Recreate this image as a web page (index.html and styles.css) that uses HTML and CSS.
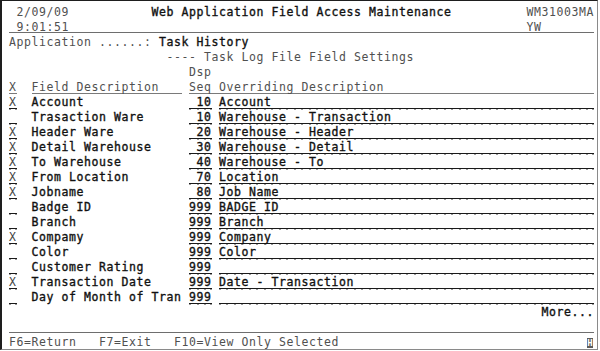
FILE: index.html
```html
<!DOCTYPE html>
<html lang="en">
<head>
    <meta charset="UTF-8">
    <title>Web Application Field Access Maintenance</title>
    <link rel="stylesheet" href="styles.css">
</head>
<body>
    <div class="screen">
        <!-- Header -->
        <div class="head">
            <div class="head-left">
                <div class="txt"> 2/09/09</div>
                <div class="txt"> 9:01:51</div>
            </div>
            <div class="title">Web Application Field Access Maintenance</div>
            <div class="head-right">
                <div class="txt">WM31003MA</div>
                <div class="txt">YW</div>
            </div>
        </div>

        <div class="line">Application ......: <span class="out">Task History</span></div>
        <div class="line">                     ---- Task Log File Field Settings</div>
        <div class="line">                        Dsp</div>

        <div class="row">
            <span class="x hd">X</span>
            <span class="desc hd">Field Description</span>
            <span class="seqovr hd">Seq Overriding Description</span>
        </div>

        <div class="row"><span class="x fld">X</span><span class="desc out">Account</span><span class="seq fld">10</span><span class="ovr fld">Account</span></div>
        <div class="row"><span class="x fld"></span><span class="desc out">Trasaction Ware</span><span class="seq fld">10</span><span class="ovr fld">Warehouse - Transaction</span></div>
        <div class="row"><span class="x fld">X</span><span class="desc out">Header Ware</span><span class="seq fld">20</span><span class="ovr fld">Warehouse - Header</span></div>
        <div class="row"><span class="x fld">X</span><span class="desc out">Detail Warehouse</span><span class="seq fld">30</span><span class="ovr fld">Warehouse - Detail</span></div>
        <div class="row"><span class="x fld">X</span><span class="desc out">To Warehouse</span><span class="seq fld">40</span><span class="ovr fld">Warehouse - To</span></div>
        <div class="row"><span class="x fld">X</span><span class="desc out">From Location</span><span class="seq fld">70</span><span class="ovr fld">Location</span></div>
        <div class="row"><span class="x fld">X</span><span class="desc out">Jobname</span><span class="seq fld">80</span><span class="ovr fld">Job Name</span></div>
        <div class="row"><span class="x fld"></span><span class="desc out">Badge ID</span><span class="seq fld">999</span><span class="ovr fld">BADGE ID</span></div>
        <div class="row"><span class="x fld"></span><span class="desc out">Branch</span><span class="seq fld">999</span><span class="ovr fld">Branch</span></div>
        <div class="row"><span class="x fld">X</span><span class="desc out">Compamy</span><span class="seq fld">999</span><span class="ovr fld">Company</span></div>
        <div class="row"><span class="x fld"></span><span class="desc out">Color</span><span class="seq fld">999</span><span class="ovr fld">Color</span></div>
        <div class="row"><span class="x fld"></span><span class="desc out">Customer Rating</span><span class="seq fld">999</span><span class="ovr fld"></span></div>
        <div class="row"><span class="x fld">X</span><span class="desc out">Transaction Date</span><span class="seq fld">999</span><span class="ovr fld">Date - Transaction</span></div>
        <div class="row"><span class="x fld"></span><span class="desc out">Day of Month of Tran</span><span class="seq fld">999</span><span class="ovr fld"></span></div>

        <div class="more">More...</div>

        <!-- Function keys -->
        <div class="footer">
            <span class="keys">F6=Return   F7=Exit   F10=View Only Selected</span>
            <span class="ind">H</span>
        </div>
    </div>
</body>
</html>
```

FILE: styles.css
```css
/* 5250 style screen, 78 columns of 7.5px, rows of 15px */
:root {
    --label-color: #505050;
    --data-color: #111;
    --field-line: #1a1a1a;
    --field-tick: #9a9a9a;
    --rule-color: #6e6e6e;
    --col: 7.5px;
}

body {
    margin: 0;
    background: #fff;
    font-family: "DejaVu Sans Mono", monospace;
    font-size: 11.5px;
    letter-spacing: 0.576px;
    line-height: 15px;
    color: var(--label-color);
}

.screen {
    box-sizing: border-box;
    width: 598px;
    height: 350px;
    border-left: 2px solid #1e1e1e;
    border-top: 1px solid #1e1e1e;
    border-right: 1px solid #8a8a8a;
    border-bottom: 1px solid #8a8a8a;
    padding: 4px 0 0 7px;
    overflow: hidden;
}

.screen > div {
    width: 585px;
}

/* Header */
.head {
    display: grid;
    grid-template-columns: 142.5px 375px 67.5px;
    height: 27px;
    border-bottom: 1px solid var(--rule-color);
    margin-bottom: 2px;
}

.txt,
.title,
.line,
.row span,
.keys {
    white-space: pre;
    height: 15px;
}

/* bright (high intensity) text */
.title,
.out,
.fld,
.more {
    color: var(--data-color);
    -webkit-text-stroke: 0.35px var(--data-color);
}

/* Data rows */
.row {
    display: flex;
    height: 15px;
}

.x {
    width: 7.5px;
}

.desc {
    width: 150px;
    margin-left: 15px;
}

.seq {
    width: 22.5px;
    margin-left: 7.5px;
    text-align: right;
}

.ovr {
    width: 375px;
    margin-left: 7.5px;
}

.seqovr {
    width: 405px;
    margin-left: 7.5px;
}

.hd {
    background: linear-gradient(#7a7a7a, #7a7a7a) 0 13px / 100% 1px no-repeat;
}

.fld {
    background:
        linear-gradient(var(--field-line), var(--field-line)) 0 13px / 100% 1px no-repeat,
        linear-gradient(var(--field-tick), var(--field-tick)) right 14px / 2px 1px no-repeat,
        repeating-linear-gradient(90deg, var(--field-tick) 0 2px, transparent 2px var(--col)) 0 14px / 100% 1px no-repeat;
}

.x.fld {
    color: #444;
    -webkit-text-stroke: 0;
}

.more {
    height: 15px;
    text-align: right;
}

/* Footer */
.footer {
    display: flex;
    justify-content: space-between;
    margin-top: 12px;
    padding-top: 2px;
    border-top: 1px solid var(--rule-color);
    height: 15px;
}

.ind {
    display: inline-block;
    width: 6px;
    height: 10px;
    margin: 3px 1px 0 0;
    background: #5c5c5c;
    color: #fff;
    font-size: 9px;
    line-height: 10px;
    letter-spacing: 0;
    text-align: center;
    font-weight: bold;
}
```
